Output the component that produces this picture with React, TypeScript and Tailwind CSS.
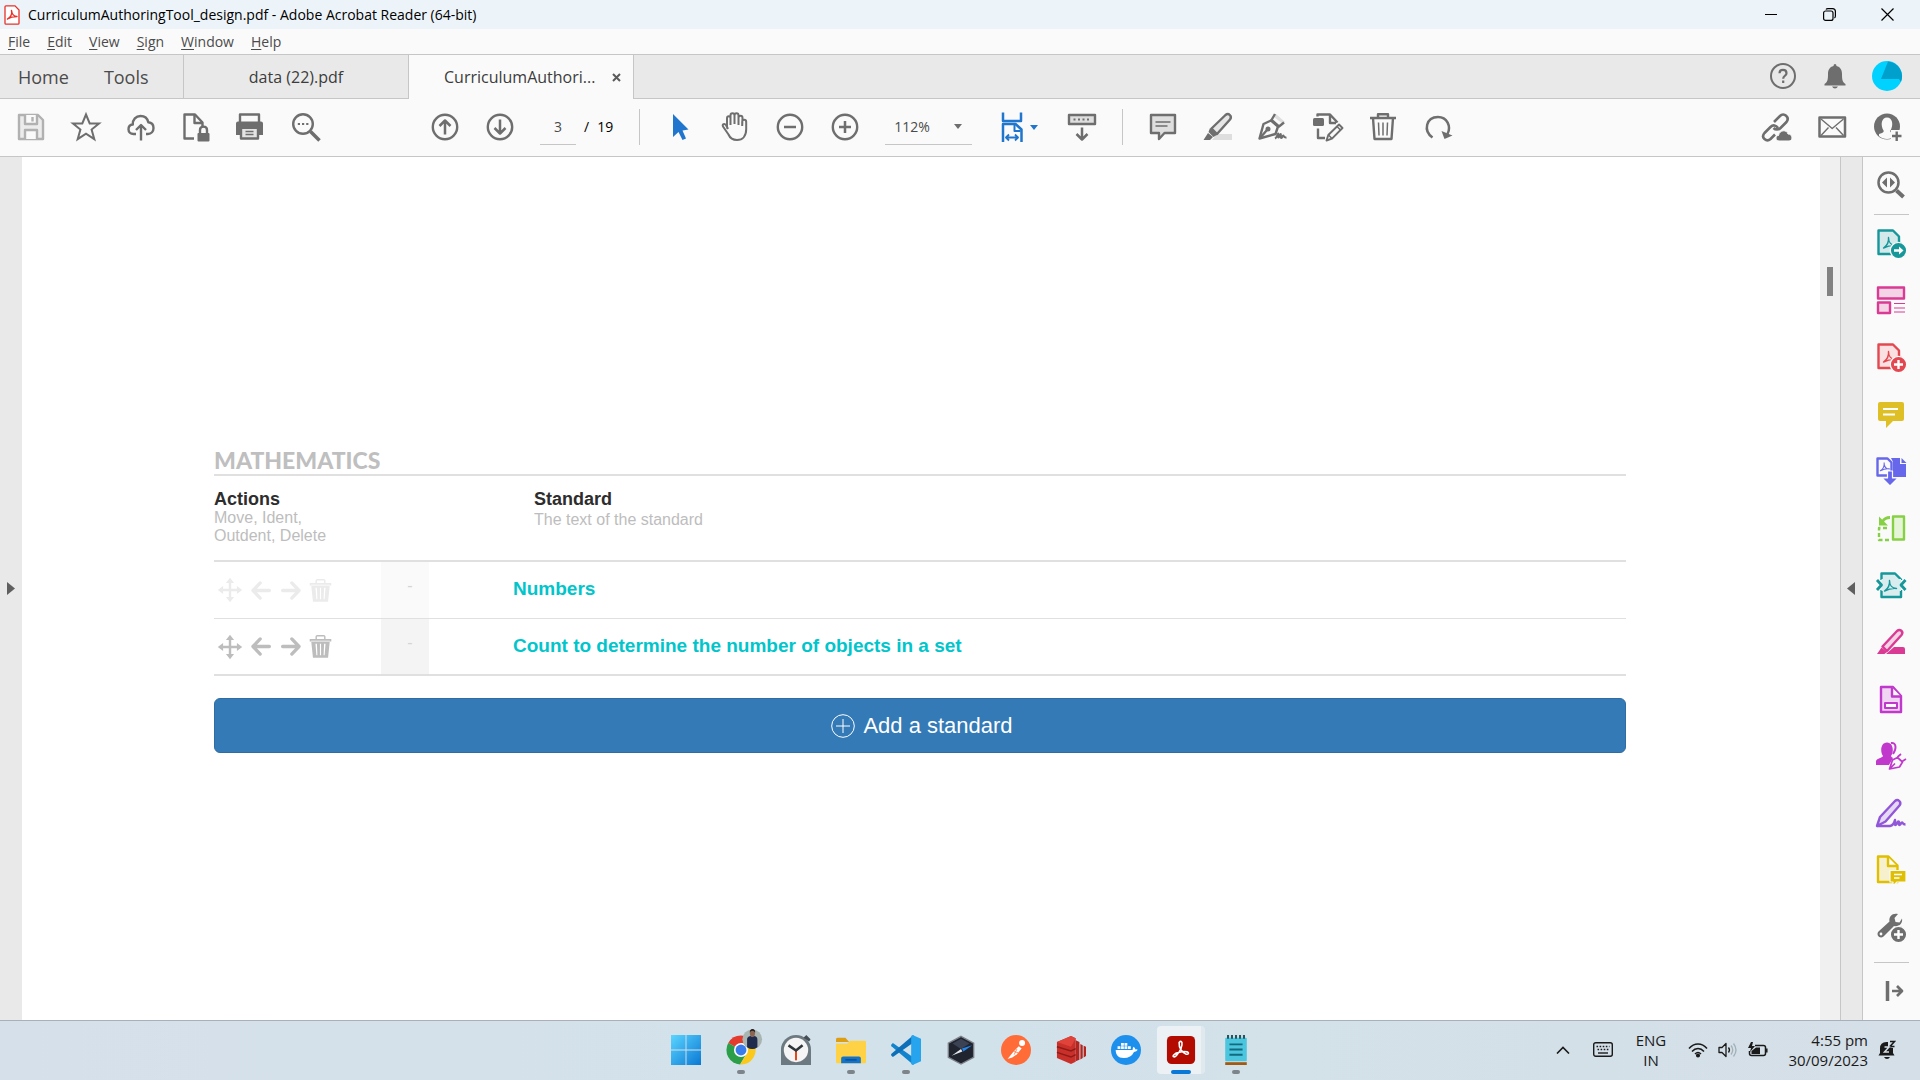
import React from "react";

const GRAY = "#6e6e6e";

type IconProps = { children: React.ReactNode; size?: number; color?: string };

// Every icon is drawn on a 32 unit grid
const Icon = ({ children, size = 32, color = GRAY }: IconProps) => (
  <svg
    width={size}
    height={size}
    viewBox="0 0 32 32"
    fill="none"
    stroke={color}
    strokeWidth="2.4"
    strokeLinecap="butt"
    strokeLinejoin="round"
    aria-hidden="true"
    className="block shrink-0"
  >
    {children}
  </svg>
);

const IconButton = ({ label, children, color }: { label: string; children: React.ReactNode; color?: string }) => (
  <button type="button" aria-label={label} className="h-8 w-8 shrink-0">
    <Icon color={color}>{children}</Icon>
  </button>
);

const Caret = ({ color = GRAY }: { color?: string }) => (
  <svg width="8" height="5" viewBox="0 0 8 5" fill={color} aria-hidden="true" className="block shrink-0">
    <path d="M0 0h8L4 5z" />
  </svg>
);

const Swirl = () => (
  <path d="M8.500 21c3-2 5.500-6 5-10.500 0 5 3 8 7 8-4-.5-8 .5-12 2.500z" strokeWidth="1.400" />
);

const fileTools = [
  {
    label: "Save",
    color: "#b1b1b1",
    icon: (
      <>
        <path d="M4 4h19l5 5v19H4z" fill="#ececec" />
        <path d="M10 4v9h12V4M10 28v-9h12v9" fill="#fafafa" />
        <path d="M17.500 6v4.500" />
      </>
    ),
  },
  { label: "Star", icon: <path d="M16 3.500l3.700 9H29l-7.400 6 2.700 9.700L16 22.600l-8.300 5.600 2.700-9.700L3 12.500h9.300z" strokeLinejoin="miter" strokeWidth="2" /> },
  {
    label: "Upload",
    icon: (
      <>
        <path d="M11 23H8.500C5.500 23 3.500 21 3.500 18.200c0-2.600 1.800-4.500 4.300-4.700C7.500 8.500 11 5 15.500 5c4 0 7 2.500 7.800 6.300 3.200.3 5.200 2.700 5.200 5.700 0 3.400-2.300 6-5.500 6h-2" />
        <path d="M16 29.500V14.500M11 19l5-5 5 5" />
      </>
    ),
  },
  {
    label: "Protect",
    icon: (
      <>
        <path d="M14 27.500H4.500v-24H15l7.500 8v5" />
        <path d="M14.500 4v8h8" />
        <rect x="17.500" y="22" width="12" height="8.500" rx="1" fill={GRAY} stroke="none" />
        <path d="M20 22v-3c0-4.500 7-4.500 7 0v3" />
      </>
    ),
  },
  {
    label: "Print",
    icon: (
      <>
        <path d="M5 11V3.500h19V11" />
        <path d="M1 12.500q0-2 2-2h23q2 0 2 2V24h-5v-6H6v6H1z" fill={GRAY} stroke="none" />
        <path d="M6 18v9.500h17V18" fill="#e4e4e4" />
        <path d="M10.500 20.500h8M10.500 23.500h8" strokeWidth="1.500" />
      </>
    ),
  },
  {
    label: "Find",
    icon: (
      <>
        <circle cx="13" cy="13" r="9.800" />
        <path d="M20.500 20.500l9 9" strokeWidth="3.500" />
        <path d="M7.800 13h2.200M12 13h2.200M16.200 13h2.200" strokeWidth="2" />
      </>
    ),
  },
];

const annotateTools = [
  {
    label: "Comment",
    icon: (
      <>
        <path d="M4 4h24v18H17.500L12 28v-6H4z" fill="#dedede" />
        <path d="M8.500 11h15M8.500 15h12" strokeWidth="1.400" />
      </>
    ),
  },
  {
    label: "Highlight",
    icon: (
      <>
        <path d="M10 29l5-6h15v6z" fill="#dedede" stroke="none" />
        <path d="M9.500 17.500L23.500 4c3-2.500 7 1 4.500 4.500L15 23z" fill="#e6e6e6" />
        <path d="M8 17l7.500 6.500-4 2.500-5-5zM1.500 29l4.500-7 5 4-3 3z" fill={GRAY} stroke="none" />
      </>
    ),
  },
  {
    label: "Sign",
    icon: (
      <>
        <path d="M19 3l9 8-2 2-9-7z" fill="#dedede" stroke="none" />
        <path d="M2.500 27.500L6.500 13l7.500-3.500 7 6L18.500 23z" />
        <path d="M18 3l-3.500 6 7.500 6.500 5-4M3 27l7-8" />
        <circle cx="11" cy="18" r="1.300" fill={GRAY} />
        <path d="M18 27.500c2-1 2.500-4 3.200-5 .5 2-.6 4 .4 4s1.300-3.500 2-3.500-.3 4 .8 4 1-2.500 1.800-2.500.3 2.500 3.300 2" strokeWidth="2" />
      </>
    ),
  },
  {
    label: "Edit",
    icon: (
      <>
        <rect x="1" y="7" width="11" height="8" rx="1.500" fill={GRAY} stroke="none" />
        <path d="M5.500 5.500V3.500H18l7.500 8M18 4v8h6M6 17.500v9.500h7" />
        <path d="M14.500 29.500l1.800-5.500L27 13.500l3.500 3.500L20 27.700z" fill="#fafafa" strokeWidth="1.900" />
        <path d="M25 15.500l3.500 3.500M16.500 24l3.500 3.500" strokeWidth="1.500" />
      </>
    ),
  },
  {
    label: "Delete",
    icon: (
      <>
        <path d="M3 7h26M11 6.500V3.300h10v3.200" />
        <path d="M6 7l1.500 21h17L26 7" />
        <path d="M11.500 11.500l.5 13M16 11.500v13M20.500 11.500l-.5 13" strokeWidth="1.500" />
      </>
    ),
  },
  {
    label: "Rotate",
    icon: (
      <>
        <path d="M10.500 26.500C1 20 4 6 16 6c9 0 13.500 9.500 9.500 17" strokeWidth="2.500" />
        <path d="M19.500 20l3 8 8-3.500z" fill={GRAY} stroke="none" />
      </>
    ),
  },
];

const FileShape = ({ fill }: { fill: string }) => <path d="M3.500 3.500h14.500l6 6v17.500H3.500z" fill={fill} />;

const sideTools = [
  {
    label: "Create PDF",
    color: "#16979a",
    icon: (
      <>
        <FileShape fill="#d4eaea" />
        <Swirl />
        <circle cx="23.500" cy="23.500" r="8.200" fill="#16979a" stroke="#fafafa" strokeWidth="1.300" />
        <path d="M19 23.500h6" stroke="#fff" strokeWidth="2.500" />
        <path d="M24 19.500l4.500 4-4.500 4z" fill="#fff" stroke="none" />
      </>
    ),
  },
  {
    label: "Organize Pages",
    color: "#db3a94",
    icon: (
      <>
        <path d="M3 3.500h26v11H3zM3 18.500h12v10.500H3z" fill="#f4d3e6" />
        <path d="M19 19.500h11M19 24h11M19 28h11" strokeWidth="1.200" />
      </>
    ),
  },
  {
    label: "Combine Files",
    color: "#e34850",
    icon: (
      <>
        <FileShape fill="#fbe0e1" />
        <Swirl />
        <circle cx="23.500" cy="23.500" r="8.200" fill="#e34850" stroke="#fafafa" strokeWidth="1.300" />
        <path d="M19 23.500h9M23.500 19v9" stroke="#fff" />
      </>
    ),
  },
  {
    label: "Comment",
    color: "#dfbf26",
    icon: (
      <>
        <path d="M3 6q0-2 2-2h22q2 0 2 2v15q0 2-2 2h-9l-7 7v-7H5q-2 0-2-2z" fill="#dfbf26" stroke="none" />
        <path d="M8 11h15M8 16.500h12" stroke="#fff" strokeWidth="1.800" />
      </>
    ),
  },
  {
    label: "Export PDF",
    color: "#6767ec",
    icon: (
      <>
        <path d="M12 20.500H2.500V3.500h10l4 4v13" />
        <g transform="translate(-1)  scale(.75)">
          <Swirl />
        </g>
        <path d="M16 3h9v6h6v13H18V7z" fill="#6767ec" stroke="none" />
        <path d="M26.500 3l5 5h-5z" fill="#6767ec" stroke="none" />
        <path d="M12.500 16h5v7h5.500l-8 8-8-8h5.500z" fill="#6767ec" stroke="#fafafa" strokeWidth="1.200" />
      </>
    ),
  },
  {
    label: "Export Pages",
    color: "#86d044",
    icon: (
      <>
        <rect x="18" y="4.500" width="11" height="23" fill="#e6f5d8" />
        <path d="M14 28H4V16h10" strokeDasharray="4 2.500" />
        <path d="M15 5.500c-4 0-6 1.500-7.500 4" strokeWidth="2.800" />
        <path d="M4 4.500v9h9z" fill="#86d044" stroke="none" />
      </>
    ),
  },
  {
    label: "Compress PDF",
    color: "#16979a",
    icon: (
      <>
        <path d="M6.500 11V4.500H20l6 6V11M26 21v7H6.500V21" fill="#d9edef" />
        <path d="M6.500 10h19.500v12H6.500z" fill="#d9edef" stroke="none" />
        <g transform="translate(1 1)">
          <Swirl />
        </g>
        <path d="M2 11l4.500 5L2 21M30.500 11L26 16l4.500 5" strokeWidth="2.800" />
      </>
    ),
  },
  {
    label: "Redact",
    color: "#db3a94",
    icon: (
      <>
        <path d="M7.500 20.500L22 5c3-2.500 7 .5 4.500 4L12 25z" fill="#f4d3e6" />
        <path d="M2 28l4.500-6.500 5.500 4.500-2.500 2zM11 28l8-7h9q2 0 2 2v5z" fill="#db3a94" stroke="none" />
      </>
    ),
  },
  {
    label: "Prepare Form",
    color: "#c038cc",
    icon: (
      <>
        <path d="M6 4h12l8 9V29H6z" fill="#f0d5f2" />
        <path d="M17 4.500v9h9" fill="#fafafa" />
        <path d="M10 20h12v5H10z" fill="#fff" strokeWidth="2" />
      </>
    ),
  },
  {
    label: "Request Signatures",
    color: "#c038cc",
    icon: (
      <>
        <path d="M1 25v-4c1-3 6-3 7-5-3-4-2.500-13.500 4-13.500S19 12 16 16c.5 1 1 1.500 2 2l-4 7z" fill="#c038cc" stroke="none" />
        <path d="M16 3c5-1 6 5 2 11" strokeWidth="2" />
        <path d="M14.500 29l3-9 5-2.500 5 4.500-3 5zM22.500 17l3.500-3M27 21.500l4-2.500M15 28.500l5-5" strokeWidth="1.700" fill="#fafafa" />
      </>
    ),
  },
  {
    label: "Fill & Sign",
    color: "#9256d9",
    icon: (
      <>
        <path d="M2 29l3-9L20 4c3-2.500 7 1 4.500 4.500L10.500 24.500z" fill="#e6d9f5" />
        <path d="M2 29h13c4-1 4.500-4 5-6 .5 2-1 5 .5 5s1.500-3.500 3-3.500-.5 3.500 1 3.500 1.500-2.500 2.500-2.500.5 2 3.500 2" />
      </>
    ),
  },
  {
    label: "Send for Comments",
    color: "#dfbf00",
    icon: (
      <>
        <path d="M3 2.500h10.500l9 9V28H3z" fill="#f6f0cc" />
        <path d="M13 3v9h9" fill="#fafafa" />
        <path d="M15 16.500h16V28H22l-4 4v-4h-3z" fill="#dfbf00" stroke="#fafafa" strokeWidth="1.200" />
        <path d="M19 20.500h8M19 24h5.500" stroke="#fff" strokeWidth="1.600" />
      </>
    ),
  },
  {
    label: "More Tools",
    icon: (
      <>
        <path d="M14.500 10.500C13.500 5 18 1.500 23 3l-3.500 4 1 4 4 .5L27 7.500c1 5-3 8.500-8 7.500L8.500 25.500C5 28.500.5 24 3.500 20.500z" fill={GRAY} stroke="none" />
        <circle cx="6" cy="23" r="1.400" fill="#fafafa" stroke="none" />
        <circle cx="23.500" cy="23.500" r="8.200" fill={GRAY} stroke="#fafafa" strokeWidth="1.300" />
        <path d="M19 23.500h9M23.500 19v9" stroke="#fff" />
      </>
    ),
  },
];

const TitleBar = () => (
  <header className="flex h-[29px] items-center bg-[#edf4f9] pl-1 text-sm text-black">
    <svg width="16" height="20" viewBox="0 0 16 20" fill="#fff" stroke="#e8312a" aria-hidden="true">
      <path d="M2 .8h9l4 4.200v13.200q0 1-1 1H2q-1 0-1-1V1.800q0-1 1-1z" strokeWidth="1.300" />
      <path d="M3.500 14c3-1.500 5-5 4-8.500.5 4 2.500 6 5.500 6-3 0-6.500.5-9.500 2.500z" strokeWidth="1.400" strokeLinejoin="round" />
    </svg>
    <h1 className="ml-2">CurriculumAuthoringTool_design.pdf - Adobe Acrobat Reader (64-bit)</h1>
    <div className="ml-auto flex pr-1">
      <button type="button" aria-label="Minimize" className="flex h-7 w-[58px] items-center justify-center">
        <svg width="12" height="12" stroke="#000"><path d="M0 5.500h12" /></svg>
      </button>
      <button type="button" aria-label="Restore" className="flex h-7 w-[58px] items-center justify-center">
        <svg width="13" height="13" fill="none" stroke="#000" strokeWidth="1.200">
          <rect x=".6" y="3" width="9.400" height="9.400" rx="2" />
          <path d="M3 1.500Q3.500.6 5 .6h4.500q2.900 0 2.900 3V8q0 1.500-1 2" />
        </svg>
      </button>
      <button type="button" aria-label="Close" className="flex h-7 w-[58px] items-center justify-center">
        <svg width="13" height="13" stroke="#000" strokeWidth="1.200"><path d="M.5.5l12 12M12.500.5l-12 12" /></svg>
      </button>
    </div>
  </header>
);

const MenuBar = () => (
  <nav className="flex h-[25px] items-center gap-[17px] bg-[#fafafa] pl-2 text-sm text-[#4b4b4b]">
    {["File", "Edit", "View", "Sign", "Window", "Help"].map((item) => (
      <button type="button" key={item}>
        <span className="underline underline-offset-2">{item[0]}</span>
        {item.slice(1)}
      </button>
    ))}
  </nav>
);

const TabBar = () => (
  <div className="flex h-[45px] border-t border-[#c6c6c6] bg-[#e9e9e9] text-[#4b4b4b]">
    <div className="flex w-[184px] items-center gap-[35px] border-r border-b border-[#c6c6c6] pl-[18px] text-lg">
      <button type="button">Home</button>
      <button type="button">Tools</button>
    </div>
    <button type="button" className="w-[225px] border-r border-b border-[#c6c6c6] text-base text-[#3c3c3c]">
      data (22).pdf
    </button>
    <div className="flex w-[225px] items-center border-r border-[#c6c6c6] bg-[#fafafa] pl-[35px] text-base text-[#3c3c3c]">
      <button type="button" className="w-[154px] text-left">CurriculumAuthori...</button>
      <button type="button" aria-label="Close tab" className="ml-[14px]">
        <svg width="9" height="9" stroke="#5a5a5a" strokeWidth="2"><path d="M1 1l7 7M8 1L1 8" /></svg>
      </button>
    </div>
    <div className="flex flex-1 items-center justify-end gap-5 border-b border-[#c6c6c6] pr-[17px] pb-[2px]">
      <IconButton label="Help">
        <circle cx="16" cy="16" r="12" strokeWidth="2" />
        <path d="M12.500 13.200c0-4.400 7-4.400 7 0 0 2.500-3.300 2.700-3.300 5.500M16.200 20.500v2.500" strokeWidth="2.200" />
      </IconButton>
      <IconButton label="Notifications">
        <path d="M14.500 6q0-2 1.500-2t1.500 2c4 1 5.500 4 5.500 8 0 6 .5 8 3.500 10v1.500h-21V24c3-2 3.500-4 3.500-10 0-4 1.500-7 5.500-8zM13 26.500h6q-1 2-3 2t-3-2z" fill={GRAY} stroke="none" />
      </IconButton>
      <IconButton label="Account">
        <circle cx="16" cy="16" r="15" fill="#00d2ff" stroke="none" />
        <path d="M17 1.500A15 15 0 0 1 30 22l-2-3H10z" fill="#00a0cc" stroke="none" />
      </IconButton>
    </div>
  </div>
);

const Toolbar = () => (
  <div className="flex h-[58px] items-center border-b border-[#c6c6c6] bg-[#fafafa] pr-[17px] pb-px pl-[15px] text-sm">
    <div className="flex gap-[23px]">
      {fileTools.map((tool) => (
        <IconButton key={tool.label} label={tool.label} color={tool.color}>{tool.icon}</IconButton>
      ))}
    </div>
    <div className="ml-[107px] flex gap-[23px]">
      <IconButton label="Previous page">
        <circle cx="16" cy="16" r="12.200" />
        <path d="M16 23.500V10M10.500 15L16 9.500l5.500 5.500" strokeWidth="2.500" />
      </IconButton>
      <IconButton label="Next page">
        <circle cx="16" cy="16" r="12.200" />
        <path d="M16 8.500V22M10.500 17l5.500 5.500 5.500-5.500" strokeWidth="2.500" />
      </IconButton>
    </div>
    <input
      aria-label="Page number"
      defaultValue="3"
      className="ml-6 h-9 w-9 border-b border-[#c6c6c6] text-center text-[#4b4b4b]"
    />
    <span className="ml-2 text-black">/</span>
    <span className="ml-2 w-5 text-black">19</span>
    <div className="ml-[22px] h-9 w-px bg-[#c6c6c6]" />
    <div className="ml-6 flex gap-[23px]">
      <IconButton label="Select" color="#2076cc">
        <path d="M9 3v23l5.500-5 4 8 3.500-1.500-3.500-8 6-1z" fill="#2076cc" stroke="none" />
      </IconButton>
      <IconButton label="Pan">
        <path
          d="M8 17.500V7.500c0-3 3.500-3 3.500 0V14M11.500 13V4.500c0-3 4-3 4 0V13M15.500 13V4.500c0-3 4-3 4 0V14M19.500 14V7c0-3 4-3 4 0l-.3 8M23.200 15v-4c0-3 4-3 4 0v7c0 7-3.500 11-9.200 11-5 0-7-2-8.500-5.500L4 15.500c-1-2.500 1.500-3.500 3-1.500l2 4"
          strokeWidth="2"
        />
      </IconButton>
      <IconButton label="Zoom out">
        <circle cx="16" cy="16" r="12.200" />
        <path d="M10 16h12" strokeWidth="2.500" />
      </IconButton>
      <IconButton label="Zoom in">
        <circle cx="16" cy="16" r="12.200" />
        <path d="M10 16h12M16 10v12" strokeWidth="2.500" />
      </IconButton>
    </div>
    <div className="ml-6 flex h-9 w-[87px] items-center border-b border-[#c6c6c6] pl-[9px]">
      <select aria-label="Zoom level" className="w-[60px] appearance-none text-[#4b4b4b]">
        <option>112%</option>
      </select>
      <Caret />
    </div>
    <button type="button" aria-label="Fit width" className="ml-6 flex items-center gap-[2px]">
      <Icon color="#2076cc">
        <path d="M7 1.500V10h18V1.500M25.500 31V18.500l-6-5.500H7v18" strokeWidth="2.500" />
        <path d="M18.500 14v6h6" strokeWidth="2" />
        <path d="M10 26.500h12M13 23.500l-3 3 3 3M19 23.500l3 3-3 3" strokeWidth="1.800" />
      </Icon>
      <Caret color="#2076cc" />
    </button>
    <div className="ml-7 flex items-center">
      <IconButton label="Scroll mode">
        <rect x="3" y="4" width="26" height="9" fill="#dedede" />
        <path d="M7.500 8.500h2M12 8.500h2M16.500 8.500h2M21 8.500h2" strokeWidth="2" />
        <path d="M16 16.500V28M10.500 23l5.500 5.500 5.500-5.500" strokeWidth="2.500" />
      </IconButton>
    </div>
    <div className="ml-6 h-9 w-px bg-[#c6c6c6]" />
    <div className="ml-6 flex gap-[23px]">
      {annotateTools.map((tool) => (
        <IconButton key={tool.label} label={tool.label}>{tool.icon}</IconButton>
      ))}
    </div>
    <div className="ml-auto flex gap-[23px]">
      <IconButton label="Share link">
        <path d="M13 11l6-6c4-4 10 1.500 6.500 6l-6 6c-2 2-5 2-7 0M17 17c-2-3-5-3.500-7.500-1l-6 6c-4 4.500 2 9.500 6 6l4.500-4.500" strokeWidth="2.600" />
        <path d="M18 30c-4 0-4-5.500-.5-5.500 1-6 8.500-6 9.500-1.500 5 0 5 7 1 7z" fill={GRAY} stroke="#fafafa" strokeWidth="1" />
      </IconButton>
      <IconButton label="Send by email">
        <rect x="3.500" y="6.500" width="25.500" height="19" strokeWidth="2.500" />
        <path d="M5 8l11.200 9.500L27.500 8M5 24.500l7.500-8M27.500 24.500l-7.500-8" strokeWidth="1.400" />
      </IconButton>
      <IconButton label="Invite people">
        <circle cx="16" cy="15.500" r="13" fill={GRAY} stroke="none" />
        <path d="M8 25v-2c2-1 4.500-1 4.800-3C9 14 10.500 6.500 16 6.500S23 14 19.200 20c.3 2 3 2 4.800 3v2c-4 4-12 4-16 0z" fill="#fafafa" stroke="none" />
        <path d="M20 19h12v12H20z" fill="#fafafa" stroke="none" />
        <path d="M21 25h9.500M25.700 20.500v9.500" />
      </IconButton>
    </div>
  </div>
);

const rowActions = [
  {
    label: "Move",
    icon: <path d="M16 1l5 6.500h-3.500v7h7V11l6.500 5-6.500 5v-3.500h-7v7H21L16 31l-5-6.500h3.500v-7h-7V21L1 16l6.500-5v3.500h7v-7H11z" />,
    size: 26,
  },
  { label: "Outdent", icon: <path d="M14 4.500L3 16l11 11.500M4 16h24" fill="none" stroke="currentColor" strokeWidth="5" strokeLinecap="round" strokeLinejoin="round" />, size: 21 },
  { label: "Indent", icon: <path d="M18 4.500L29 16 18 27.500M28 16H4" fill="none" stroke="currentColor" strokeWidth="5" strokeLinecap="round" strokeLinejoin="round" />, size: 21 },
  {
    label: "Delete",
    icon: (
      <path
        fillRule="evenodd"
        d="M1 5.500h8V2.500Q9 0 11.500 0h9Q23 0 23 2.500v3h8V9H1zM11 2v3.500h10V2zM3 8h26l-2.500 23.500h-21zM9 12l1.300 16h1.400L11 12zM15.200 12v16h1.600V12zM21 12l-.7 16h1.400L23 12z"
      />
    ),
    size: 23,
  },
];

const standards = [
  { text: "Numbers", tone: "text-[#ebebeb]", cell: "bg-[#fafafa]", line: "border-b" },
  { text: "Count to determine the number of objects in a set", tone: "text-[#bdbdbd]", cell: "bg-[#f4f4f4]", line: "border-b-2" },
];

const Document = () => (
  <main className="flex-1 bg-white pt-[290px] pr-[194px] pl-48 font-['Liberation_Sans',Arial,sans-serif]">
    <h2 className="border-b-2 border-[#e0e0e0] font-['Lato',sans-serif] text-[23px] leading-[27px] font-black text-[#bfbfbf]">
      MATHEMATICS
    </h2>
    <table className="w-full table-fixed border-separate border-spacing-0 text-left">
      <colgroup>
        <col className="w-[167px]" />
        <col className="w-12" />
        <col />
      </colgroup>
      <thead>
        <tr className="h-[86px] align-top">
          <th className="border-b-2 border-[#e0e0e0] pt-[13px] font-normal">
            <div className="text-lg leading-5 font-bold text-[#2d2d2d]">Actions</div>
            <div className="text-[16px] leading-[18px] text-[#bdbdbd]">
              Move, Ident,
              <br />
              Outdent, Delete
            </div>
          </th>
          <td className="border-b-2 border-[#e0e0e0]" />
          <th className="border-b-2 border-[#e0e0e0] pt-[13px] pl-[105px] font-normal">
            <div className="text-lg leading-5 font-bold text-[#2d2d2d]">Standard</div>
            <div className="text-[16px] leading-[22px] text-[#bdbdbd]">The text of the standard</div>
          </th>
        </tr>
      </thead>
      <tbody>
        {standards.map((row) => (
          <tr key={row.text} className="h-[57px]">
            <td className={`${row.tone} ${row.line} border-b-[#e0e0e0]`}>
              <div className="flex items-center gap-2 pl-[3px]">
                {rowActions.map((action) => (
                  <button type="button" key={action.label} aria-label={action.label}>
                    <svg width={action.size} height={action.size} viewBox="0 0 32 32" fill="currentColor" aria-hidden="true" className="block">
                      {action.icon}
                    </svg>
                  </button>
                ))}
              </div>
            </td>
            <td className={`${row.cell} ${row.line} border-b-[#e0e0e0] pb-2 pl-[10px] text-center text-base text-[#d4d4d4]`}>-</td>
            <td className={`${row.line} border-b-[#e0e0e0] pb-[2px] pl-[84px] text-[19px] leading-6 font-bold text-[#00c5cb]`}>{row.text}</td>
          </tr>
        ))}
      </tbody>
    </table>
    <button
      type="button"
      className="mt-[22px] flex h-[55px] w-full items-center justify-center gap-2 rounded-md border border-[#2e6da4] bg-[#337ab7] pl-1 text-[22px] text-white"
    >
      <svg width="24" height="24" viewBox="0 0 24 24" fill="none" stroke="#fff" aria-hidden="true">
        <circle cx="12" cy="12" r="11.300" />
        <path d="M12 5v14M5 12h14" />
      </svg>
      Add a standard
    </button>
  </main>
);

const SidePanel = () => (
  <aside className="flex w-[58px] flex-col items-center border-l border-[#c6c6c6] bg-[#fafafa] pt-3 pr-px">
    <IconButton label="Search tools">
      <circle cx="13.500" cy="13.500" r="10" strokeWidth="2.500" />
      <path d="M12 8.500v10l-5-5zM15 8.500v10l5-5z" fill={GRAY} stroke="none" />
      <path d="M21.500 21.500l7 6.500" strokeWidth="4" />
    </IconButton>
    <hr className="mt-[13px] mb-3 w-[35px] border-[#c6c6c6]" />
    <div className="flex flex-col gap-[25px]">
      {sideTools.map((tool) => (
        <IconButton key={tool.label} label={tool.label} color={tool.color}>{tool.icon}</IconButton>
      ))}
    </div>
    <hr className="mt-[19px] mb-3 w-[35px] border-[#c6c6c6]" />
    <IconButton label="Collapse panel">
      <path d="M12.500 6v20" strokeWidth="3.500" />
      <path d="M17 16h9M22 11l5 5-5 5" strokeWidth="2.700" />
    </IconButton>
  </aside>
);

const taskbarApps = [
  {
    name: "Start",
    icon: (
      <>
        <linearGradient id="win" x1="0" y1="0" x2="1" y2="1">
          <stop stopColor="#5bd5ff" />
          <stop offset="1" stopColor="#0a78d4" />
        </linearGradient>
        <path d="M0 0h15.500v15.500H0zM16.500 0H32v15.500H16.500zM0 16.500h15.500V32H0zM16.500 16.500H32V32H16.500z" fill="url(#win)" />
      </>
    ),
  },
  {
    name: "Chrome",
    running: true,
    icon: (
      <>
        <path d="M16 16L2.400 8.500A15.500 15.500 0 0 1 29.500 8.500z" fill="#e33b2e" />
        <path d="M16 16L2.400 8.500A15.500 15.500 0 0 0 15 31.500l7-12z" fill="#2a9e48" />
        <path d="M16 8.500h13.600A15.500 15.500 0 0 1 15 31.500l7.500-12z" fill="#fbc81c" />
        <circle cx="16" cy="16" r="7.500" fill="#fff" />
        <circle cx="16" cy="16" r="5.800" fill="#3a7cec" />
        <circle cx="28" cy="4.500" r="10.500" fill="#a9b5b0" />
        <path d="M22.500 13V4q1-3 4-3l1.500 1 1.500-1q4 0 4 4v8q-5.500 4-11 0z" fill="#1f2b4d" />
        <path d="M25.500-2q0-4 2.700-4t2.700 4-2.700 4-2.700-4z" fill="#8d6653" />
        <path d="M25.300-2.500q0-4 3-4t2.800 4q-1-2-3-2t-2.800 2z" fill="#23201f" />
      </>
    ),
  },
  {
    name: "Clock",
    icon: (
      <>
        <path d="M0 32V15.500A16 15.500 0 0 1 32 15.500V32z" fill="#6d7981" />
        <path d="M24 3l3-3 4.500 4.500L30 7z" fill="#454e55" />
        <circle cx="16" cy="16" r="13" fill="#f5f5f5" />
        <path d="M16 16v11" stroke="#e04a18" strokeWidth="2.200" />
        <path d="M8 11l8 5.500 7-5.500" stroke="#2f363b" strokeWidth="2.800" fill="none" />
      </>
    ),
  },
  {
    name: "File Explorer",
    running: true,
    icon: (
      <>
        <path d="M0 4.500Q0 3 2 3h8l4 4.500H0z" fill="#dd9e13" />
        <path d="M0 9h12l3-3h16q1 0 1 1.500V29q0 1-1 1H1q-1 0-1-1z" fill="#ffd145" />
        <path d="M5.500 30v-5q0-2 2-2h17q2 0 2 2v5z" fill="#1473c8" />
        <path d="M10 26.500h12" stroke="#0c4d92" strokeWidth="1.500" />
      </>
    ),
  },
  {
    name: "Visual Studio Code",
    running: true,
    icon: (
      <>
        <path d="M2 8.500L24 24v8L.5 12q-1-1 0-2z" fill="#1283cd" />
        <path d="M2 23.500L24 8V0L.5 20q-1 1 0 2z" fill="#0d6fb8" />
        <path d="M23 0l9 4v24l-9 4-1.500-1V1z" fill="#27a4ee" />
      </>
    ),
  },
  {
    name: "NoSQLBooster",
    icon: (
      <>
        <path d="M16 1.500l13.500 7.300v15L16 31 2.500 23.800v-15z" fill="#20242f" stroke="#7c8089" strokeWidth="1.500" />
        <path d="M16 4l9 5-9 6-9-6z" fill="#3a4254" />
        <path d="M6 22l10-7 1.500 2.500z" fill="#e4e7ec" />
        <path d="M28 11l-11 3.500 1.500 3z" fill="#2487ee" />
      </>
    ),
  },
  {
    name: "Postman",
    icon: (
      <>
        <circle cx="16" cy="16" r="16" fill="#ff6c37" />
        <path d="M7 25.500l6-7.500 6-6 3 2.500-5 6-5 3.500z" fill="#fff" />
        <path d="M13.500 17.500l5 1.500M14 21l3-6" stroke="#ff6c37" strokeWidth=".8" />
        <circle cx="22.500" cy="8.500" r="3.200" fill="#fff" />
      </>
    ),
  },
  {
    name: "Redis",
    icon: (
      <>
        <path d="M1 7.500L16 1l5 2.500v25L16 31 1 24.500z" fill="#c9302a" />
        <path d="M1 7.500L16 1l5 2.500-5 9z" fill="#e0433a" />
        <path d="M1 12.500l15 4.500 5-2.500M1 18.500l15 5 5-2.500" stroke="#8e1b16" strokeWidth="1.500" fill="none" />
        <path d="M21 5.500l4 2v19L21 28zM26 9.500l2.500 1.500v13.500L26 26zM29.500 11.500l2.500 1v10l-2.500 1.500z" fill="#b32620" />
      </>
    ),
  },
  {
    name: "Docker",
    icon: (
      <>
        <circle cx="16" cy="16" r="16" fill="#1d90ed" />
        <path d="M5 16h18q0-2 1-3.500 2 1 2 3 1.500-.5 2.500.3-1 2.200-4 2.200-3 6.500-11 6.500C7.500 24.500 5 21 5 16z" fill="#fff" />
        <path d="M7 12h3v3H7zM10.700 12h3v3h-3zM14.400 12h3v3h-3zM18.100 12h3v3h-3zM10.700 8.500h3v3h-3zM14.400 8.500h3v3h-3z" fill="#fff" />
      </>
    ),
  },
  {
    name: "Adobe Acrobat",
    active: true,
    icon: (
      <>
        <rect x="1" y="1" width="30" height="30" rx="5" fill="#b30b00" />
        <path
          d="M14 8q2-2.500 3 0c.7 4-2.500 10-6 14-1.500 2-4.500 1.500-3-.5 2.500-3 10-4.500 14.500-3.500 2.500.8 1.500 3-1 2.500-4-1-8-7-7.500-12.500z"
          fill="none"
          stroke="#fff"
          strokeWidth="1.700"
          strokeLinejoin="round"
        />
      </>
    ),
  },
  {
    name: "Notepad",
    running: true,
    icon: (
      <>
        <rect x="4.500" y="3" width="23" height="25" rx="1" fill="#4cc5de" />
        <path d="M7.500 0v4M11.700 0v4M16 0v4M20.300 0v4M24.500 0v4" stroke="#24545f" strokeWidth="2.200" />
        <path d="M9 10h14M9 15.500h14M9 21h14" stroke="#126a7e" strokeWidth="2" />
        <path d="M4.500 29h23v3h-23z" fill="#a05a14" />
      </>
    ),
  },
];

const Taskbar = () => (
  <footer className="grid h-[60px] grid-cols-[1fr_auto_1fr] border-t border-[#a9b1b6] bg-linear-to-r from-[#d6e0ea] via-[#d2e2ea] to-[#d5dfe7] text-[#1a1a1a]">
    <div />
    <div className="flex items-start gap-[7px] pt-[5px] pl-px">
      {taskbarApps.map((app) => (
        <button
          type="button"
          key={app.name}
          aria-label={app.name}
          className={`flex h-12 w-12 flex-col items-center justify-end rounded ${app.active ? "border-r-4 border-[#e0e9ee] bg-[#ebf1f5] pl-1" : ""}`}
        >
          <svg width="30" height="30" viewBox="0 0 32 32" aria-hidden="true" className="block overflow-visible">
            {app.icon}
          </svg>
          <span className={`mt-[5px] h-1 rounded-full ${app.active ? "w-5 bg-[#0a78d6]" : app.running ? "w-2 bg-[#7d858a]" : "w-2"}`} />
        </button>
      ))}
    </div>
    <div className="flex items-center justify-end pr-6 pb-[2px] text-[15px] leading-5">
      <button type="button" aria-label="Show hidden icons">
        <svg width="14" height="8" fill="none" stroke="#1a1a1a" strokeWidth="1.600"><path d="M1 7.500l6-6 6 6" /></svg>
      </button>
      <button type="button" aria-label="Touch keyboard" className="ml-[23px]">
        <svg width="20" height="15" fill="none" stroke="#1a1a1a" strokeWidth="1.400">
          <rect x=".7" y=".7" width="18.600" height="13.600" rx="2" />
          <path d="M3.500 4.500h13M4.500 7.500h12" strokeDasharray="1.600 1.500" />
          <path d="M5 11h10" />
        </svg>
      </button>
      <button type="button" className="ml-[22px] w-8 text-center">
        ENG
        <br />
        IN
      </button>
      <button type="button" aria-label="Network, volume and battery" className="ml-[21px] flex items-center gap-[10px]">
        <svg width="20" height="16" viewBox="0 0 20 16" fill="none" stroke="#1a1a1a" strokeWidth="1.500">
          <path d="M1 6.500c5-6 13-6 18 0M4 9.500c3.500-4 8.500-4 12 0M7 12c2-2 4-2 6 0" />
          <circle cx="10" cy="13.500" r="1.300" fill="#1a1a1a" />
        </svg>
        <svg width="20" height="16" viewBox="0 0 20 16" fill="none" stroke="#1a1a1a" strokeWidth="1.300" strokeLinejoin="round">
          <path d="M1 5.500h3L8 1.500v13l-4-4H1zM10.500 5.500q2 2.500 0 5" />
          <path d="M13 3.500q3.500 4.500 0 9M15.500 1.500q5 6.500 0 13" stroke="#a4b0b7" />
        </svg>
        <svg width="20" height="16" viewBox="0 0 20 16" fill="none" stroke="#1a1a1a" strokeWidth="1.500">
          <path d="M7 3.500h8.500q2 0 2 2v6q0 2-2 2h-12q-2 0-2-2V9" />
          <path d="M8 5.500h4v6.500H3.500V9z" fill="#1a1a1a" stroke="none" />
          <path d="M3 0L0 6h3L2 10l5-6H4l1-4z" fill="#1a1a1a" stroke="none" />
          <path d="M18.800 6.500v4" />
        </svg>
      </button>
      <button type="button" className="ml-5 w-[80px] text-right whitespace-nowrap">
        4:55 pm
        <br />
        30/09/2023
      </button>
      <button type="button" aria-label="Do not disturb" className="ml-[10px]">
        <svg width="18" height="20" viewBox="0 0 18 20" fill="#1a1a1a">
          <path d="M2 13V8.500Q2 2 8.500 2H10v5l5 1v5l1.500 2.500H.5zM6 17h6q-1 2-3 2t-3-2z" />
          <path d="M12 1.500h4.500l-4.500 5h4.500" fill="none" stroke="#1a1a1a" strokeWidth="1.600" />
          <path d="M6.500 7h4.500l-4.500 5H11" fill="none" stroke="#d5dfe7" strokeWidth="1.500" />
        </svg>
      </button>
    </div>
  </footer>
);

export default function App() {
  return (
    <div className="flex min-h-screen flex-col font-['Open_Sans','Noto_Sans',sans-serif]">
      <TitleBar />
      <MenuBar />
      <TabBar />
      <Toolbar />
      <div className="flex flex-1">
        <button type="button" aria-label="Open navigation pane" className="flex w-[22px] items-center bg-[#e9e9e9] pl-[7px]">
          <svg width="8" height="13" fill="#5f5f5f"><path d="M0 0v13l8-6.500z" /></svg>
        </button>
        <Document />
        {/* Scroll track with its thumb */}
        <div className="flex w-[21px] flex-col items-center border-r border-[#c6c6c6] bg-[#f0f0f0] pt-[110px]">
          <div className="h-[29px] w-[6px] bg-[#828282]" />
        </div>
        <button type="button" aria-label="Close tools pane" className="flex w-[21px] items-center bg-[#e9e9e9] pl-[6px]">
          <svg width="8" height="13" fill="#5f5f5f"><path d="M8 0v13L0 6.500z" /></svg>
        </button>
        <SidePanel />
      </div>
      <Taskbar />
    </div>
  );
}
